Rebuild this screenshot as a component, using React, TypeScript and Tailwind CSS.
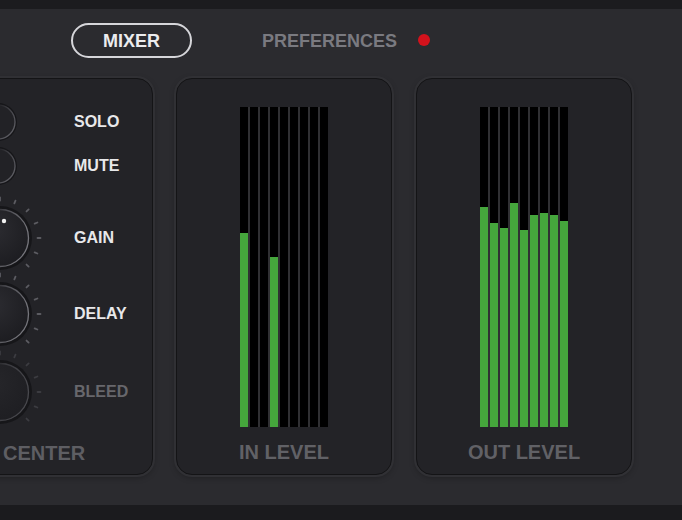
import React from "react";

const TICK_ANGLES = [135, 157.5, 180, 202.5, 225, 247.5, 270, 292.5, 315, 337.5, 360, 382.5, 405];

function Knob({ id, dim = false, indicator = false }: { id: string; dim?: boolean; indicator?: boolean }) {
  const tickColor = dim ? "#3c3c41" : "#5c5c62";
  return (
    <svg width={80} height={76} viewBox="-40 -38 80 76" overflow="visible" className="shrink-0">
      <defs>
        <radialGradient id={`${id}-body`} cx="40%" cy="35%" r="70%">
          <stop offset="0%" stopColor={dim ? "#26262a" : "#2c2c31"} />
          <stop offset="100%" stopColor={dim ? "#1e1e22" : "#1c1c20"} />
        </radialGradient>
        <linearGradient id={`${id}-edge`} x1="0" y1="0" x2="1" y2="0.3">
          <stop offset="0%" stopColor="#000" stopOpacity="0" />
          <stop offset="55%" stopColor={dim ? "#3a3a3f" : "#4a4a50"} />
          <stop offset="100%" stopColor={dim ? "#48484d" : "#75757b"} />
        </linearGradient>
      </defs>
      {TICK_ANGLES.map((a) => {
        const r = (a * Math.PI) / 180;
        const x1 = Math.cos(r) * 37.5;
        const y1 = Math.sin(r) * 37.5;
        const x2 = Math.cos(r) * 40.5;
        const y2 = Math.sin(r) * 40.5;
        return <line key={a} x1={x1} y1={y1} x2={x2} y2={y2} stroke={tickColor} strokeWidth={1.8} strokeLinecap="round" />;
      })}
      <circle r={32} fill="#161619" />
      <circle r={29} fill={`url(#${id}-body)`} />
      <circle r={28.5} fill="none" stroke={`url(#${id}-edge)`} strokeWidth={1.3} />
      {indicator && <circle cx={4} cy={-17} r={2.2} fill="#f2f2f2" />}
    </svg>
  );
}

function RoundButton({ id }: { id: string }) {
  return (
    <svg width={44} height={40} viewBox="-22 -20 44 40" overflow="visible" className="shrink-0">
      <defs>
        <linearGradient id={`${id}-edge`} x1="0" y1="0" x2="1" y2="0.6">
          <stop offset="0%" stopColor="#000" stopOpacity="0" />
          <stop offset="60%" stopColor="#3c3c41" />
          <stop offset="100%" stopColor="#5a5a60" />
        </linearGradient>
      </defs>
      <circle r={19} fill="#161619" />
      <circle r={17.5} fill="#222226" />
      <circle r={17} fill="none" stroke={`url(#${id}-edge)`} strokeWidth={1.3} />
    </svg>
  );
}

function Meter({ levels }: { levels: number[] }) {
  return (
    <div className="flex h-[320px] w-[88px] gap-[2px] bg-[#303033]">
      {levels.map((l, i) => (
        <div key={i} className="flex h-full w-[8px] flex-col justify-end bg-black">
          <div className="w-full bg-[#45a63c]" style={{ height: `${l}px` }} />
        </div>
      ))}
    </div>
  );
}

const panelCls =
  "rounded-[16px] bg-[#232327] border border-[#141416] shadow-[0_0_0_2px_#303034,0_2px_6px_rgba(0,0,0,0.35)]";

export default function App() {
  return (
    <div
      className="flex h-[520px] w-[682px] flex-col overflow-hidden bg-[#2b2b2f]"
      style={{ fontFamily: "'Liberation Sans', Arial, sans-serif" }}
    >
      <div className="h-[9px] shrink-0 bg-[#1c1c1f]" />
      <div className="flex h-[69px] shrink-0 items-start pl-[71px] pt-[14px]">
        <div className="flex h-[35px] w-[121px] items-center justify-center rounded-full border-2 border-[#d6d6da] pt-[1px] text-[18px] font-bold text-[#ececee]">
          MIXER
        </div>
        <div className="ml-[70px] flex h-[35px] items-center pt-[2px] text-[18px] font-bold text-[#7a7a80]">PREFERENCES</div>
        <div className="ml-[21px] mt-[11px] h-[12px] w-[12px] rounded-full bg-[#d3121c]" />
      </div>

      <div className="flex h-[397px] shrink-0 gap-[23px]">
        {/* left channel panel */}
        <div className={`ml-[-80px] flex w-[233px] shrink-0 flex-col pt-[25px] ${panelCls}`}>
          <div className="flex h-[36px] items-center">
            <div className="flex w-[153px] items-center pl-[55px]">
              <RoundButton id="solo" />
            </div>
            <span className="text-[16px] font-bold text-[#e8e8ea]">SOLO</span>
          </div>
          <div className="mt-[8px] flex h-[36px] items-center">
            <div className="flex w-[153px] items-center pl-[55px]">
              <RoundButton id="mute" />
            </div>
            <span className="text-[16px] font-bold text-[#e8e8ea]">MUTE</span>
          </div>
          <div className="mt-[16px] flex h-[76px] items-center">
            <div className="flex w-[153px] items-center pl-[39px]">
              <Knob id="gain" indicator />
            </div>
            <span className="text-[16px] font-bold text-[#e8e8ea]">GAIN</span>
          </div>
          <div className="flex h-[76px] items-center">
            <div className="flex w-[153px] items-center pl-[39px]">
              <Knob id="delay" />
            </div>
            <span className="text-[16px] font-bold text-[#e8e8ea]">DELAY</span>
          </div>
          <div className="mt-[2px] flex h-[76px] items-center">
            <div className="flex w-[153px] items-center pl-[39px]">
              <Knob id="bleed" dim />
            </div>
            <span className="text-[16px] font-bold text-[#67676c]">BLEED</span>
          </div>
          <div className="mt-[11px] pl-[82px] text-[20px] font-bold leading-[24px] text-[#5e5e63]">CENTER</div>
        </div>

        {/* in level */}
        <div className={`flex w-[216px] shrink-0 flex-col items-center pt-[28px] ${panelCls}`}>
          <Meter levels={[194, 0, 0, 170, 0, 0, 0, 0, 0]} />
          <div className="mt-[13px] text-[20px] font-bold leading-[24px] text-[#616166]">IN LEVEL</div>
        </div>

        {/* out level */}
        <div className={`ml-[1px] flex w-[216px] shrink-0 flex-col items-center pt-[28px] ${panelCls}`}>
          <Meter levels={[220, 204, 199, 224, 197, 212, 214, 212, 206]} />
          <div className="mt-[13px] text-[20px] font-bold leading-[24px] text-[#616166]">OUT LEVEL</div>
        </div>
      </div>

      <div className="flex-1" />
      <div className="h-[15px] shrink-0 bg-[#1b1b1e]" />
    </div>
  );
}
